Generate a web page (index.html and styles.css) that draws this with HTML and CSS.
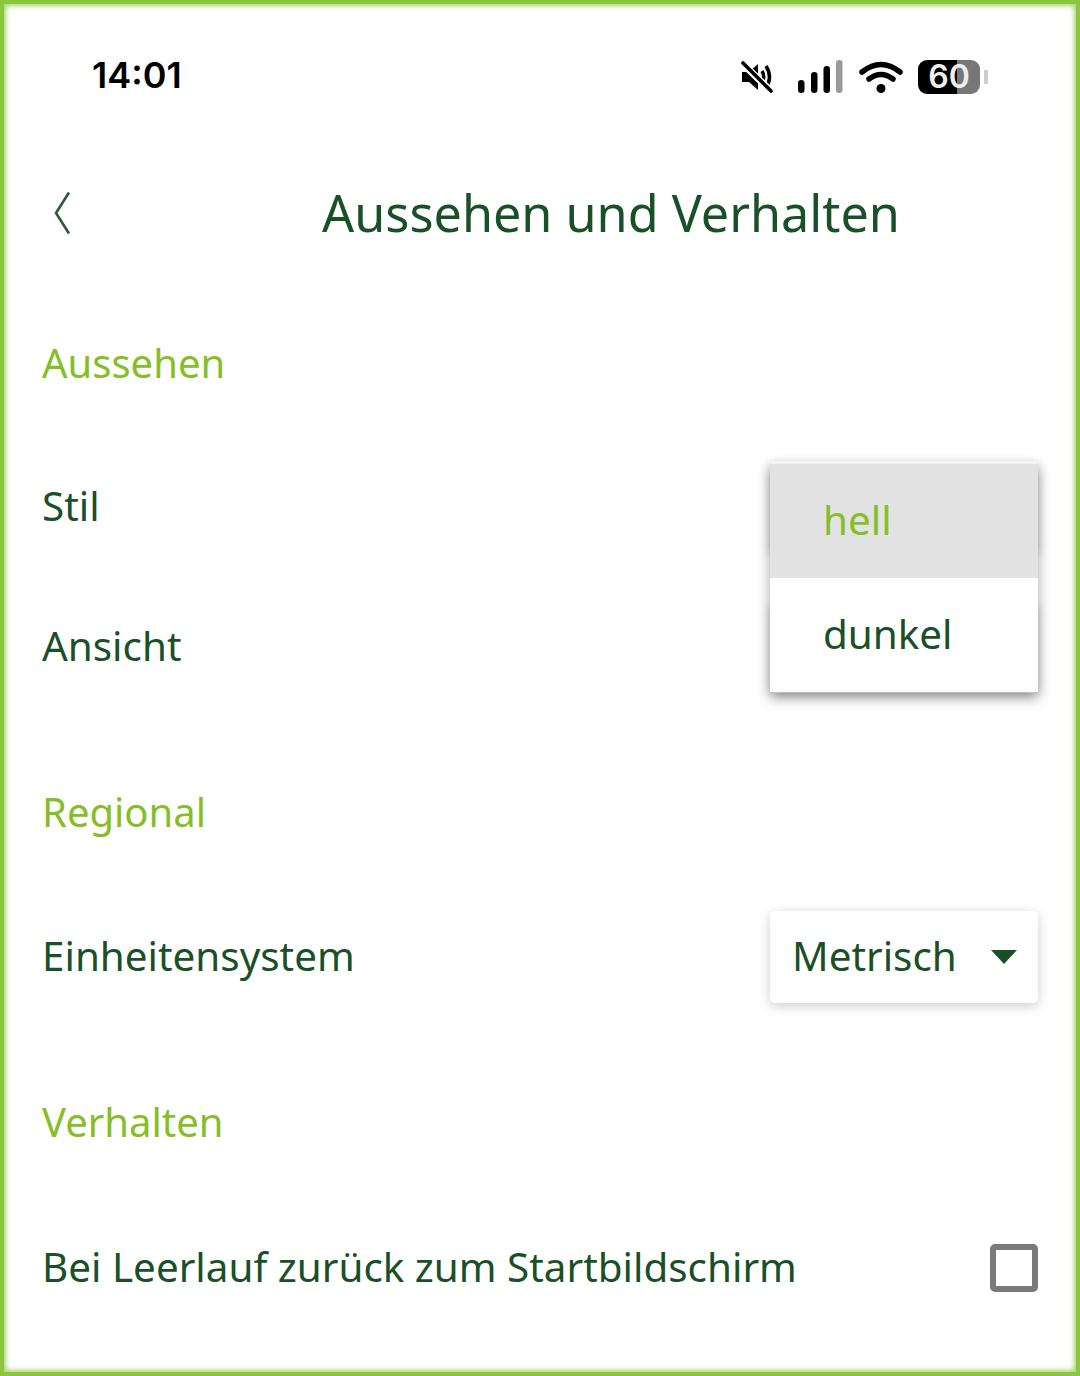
FILE: index.html
```html
<!DOCTYPE html>
<html lang="de">
<head>
  <meta charset="utf-8">
  <title>Aussehen und Verhalten</title>
  <link rel="stylesheet" href="styles.css">
</head>
<body>
<div class="screen">

  <div class="statusbar">
    <div class="time">14:01</div>
    <div class="status-icons">
      <svg class="icon-mute" width="32" height="32" viewBox="0 0 32 32">
        <path d="M1 11h7l9 -8v26l-9 -8h-7z" fill="#000"/>
        <path d="M21 10q3.500 6 0 12M25 5q7 11 0 22" fill="none" stroke="#000" stroke-width="3.500"/>
        <path d="M1 2l30 29" stroke="#fff" stroke-width="7"/>
        <path d="M2 2l28 28" stroke="#000" stroke-width="3.600" stroke-linecap="round"/>
      </svg>
      <svg class="icon-signal" width="46" height="33" viewBox="0 0 46 33">
        <rect x="0" y="20" width="6.5" height="13" rx="3.2" fill="#000"/>
        <rect x="13" y="12" width="6.5" height="21" rx="3.2" fill="#000"/>
        <rect x="25.500" y="6" width="6.5" height="27" rx="3.2" fill="#000"/>
        <rect x="38" y="0" width="6.5" height="33" rx="3.2" fill="#999"/>
      </svg>
      <svg class="icon-wifi" width="44" height="33" viewBox="0 0 44 33">
        <path d="M3 12q19 -15 38 0M10 19q12 -9 24 0" fill="none" stroke="#000" stroke-width="5.500" stroke-linecap="round"/>
        <circle cx="22" cy="28.500" r="4.500" fill="#000"/>
      </svg>
      <div class="battery">
        <div class="battery-body"><span>60</span></div>
        <div class="battery-nub"></div>
      </div>
    </div>
  </div>

  <div class="header">
    <svg class="back" width="18" height="44" viewBox="0 0 18 44">
      <path d="M15 1.500L2 22l13 20.500" fill="none" stroke="#2a5c38" stroke-width="2.600"/>
    </svg>
    <div class="title">Aussehen und Verhalten</div>
  </div>

  <div class="section-title">Aussehen</div>
  <div class="group">
    <div class="row">
      <div class="label">Stil</div>
      <div class="select"></div>
    </div>
    <div class="row">
      <div class="label">Ansicht</div>
      <div class="select"></div>
    </div>
    <div class="menu">
      <div class="menu-item selected">hell</div>
      <div class="menu-item">dunkel</div>
    </div>
  </div>

  <div class="section-title">Regional</div>
  <div class="group regional">
    <div class="row">
      <div class="label">Einheitensystem</div>
      <div class="select">
        <span class="label">Metrisch</span>
        <div class="arrow"></div>
      </div>
    </div>
  </div>

  <div class="section-title">Verhalten</div>
  <div class="group last">
    <div class="row">
      <div class="label">Bei Leerlauf zurück zum Startbildschirm</div>
      <div class="checkbox"></div>
    </div>
  </div>

</div>
</body>
</html>
```

FILE: styles.css
```css
html, body {
  margin: 0;
  background: #fff;
  font-family: "Noto Sans", "Open Sans", sans-serif;
}

.screen {
  width: 1080px;
  height: 1376px;
  box-sizing: border-box;
  border: 4px solid #8cc63f;
  box-shadow: inset 0 0 5px 2px #a9d670;
  overflow: hidden;
  padding: 0 38px;
  color: #1a5028;
}

/* status bar */
.statusbar {
  display: flex;
  align-items: center;
  justify-content: space-between;
  height: 142px;
  padding: 0 51px 0 50px;
  margin-right: -1px;
}

.time {
  font-family: "Inter", sans-serif;
  font-size: 36px;
  font-weight: 600;
  color: #000;
}

.status-icons {
  display: flex;
  align-items: center;
  gap: 15px;
  margin-top: 3px;
}

.icon-mute {
  margin-right: 10px;
}

.battery {
  display: flex;
  align-items: center;
  gap: 4px;
}

.battery-body {
  width: 62px;
  height: 34px;
  border-radius: 9px;
  background: linear-gradient(to right, #000 63%, #777 63%);
  color: #eee;
  font-family: "Inter", sans-serif;
  font-size: 32px;
  font-weight: 600;
  line-height: 34px;
  text-align: center;
}

.battery-nub {
  width: 4px;
  height: 14px;
  background: #ccc;
}

/* header */
.header {
  display: flex;
  align-items: center;
  height: 134px;
  margin-bottom: 55px;
}

.back {
  margin-left: 12px;
}

.title {
  flex: 1;
  text-align: center;
  font-size: 50.300px;
  line-height: 60px;
  padding-left: 112px;
}

/* sections */
.section-title {
  color: #86be28;
  font-size: 40px;
  line-height: 56px;
}

.group {
  position: relative;
  display: flex;
  flex-direction: column;
  gap: 48px;
  margin-top: 70px;
  margin-bottom: 91px;
}

.group.regional {
  margin-top: 71px;
}

.group.last {
  margin-top: 72px;
  margin-bottom: 0;
}

.row {
  display: flex;
  align-items: center;
  justify-content: space-between;
  min-height: 92px;
}

.label {
  font-size: 40.400px;
  padding-bottom: 4px;
}

.select {
  display: flex;
  align-items: center;
  justify-content: space-between;
  box-sizing: border-box;
  width: 268px;
  height: 92px;
  padding: 0 21px 0 22px;
  background: #fff;
  border-radius: 5px;
  box-shadow: 0 3px 12px rgba(0, 0, 0, 0.2);
}

.arrow {
  width: 0;
  height: 0;
  border-left: 13px solid transparent;
  border-right: 13px solid transparent;
  border-top: 14px solid #1a5028;
}

.checkbox {
  box-sizing: border-box;
  width: 48px;
  height: 48px;
  border: 6px solid #7a7a7a;
  border-radius: 5px;
}

/* open dropdown */
.menu {
  position: absolute;
  top: 3px;
  right: 0;
  width: 268px;
  background: #fff;
  box-shadow: 0 5px 12px rgba(0, 0, 0, 0.35);
}

.menu-item {
  height: 114px;
  line-height: 112px;
  padding-left: 53px;
  font-size: 40.400px;
}

.menu-item.selected {
  background: #e2e2e2;
  color: #86be28;
}
```
